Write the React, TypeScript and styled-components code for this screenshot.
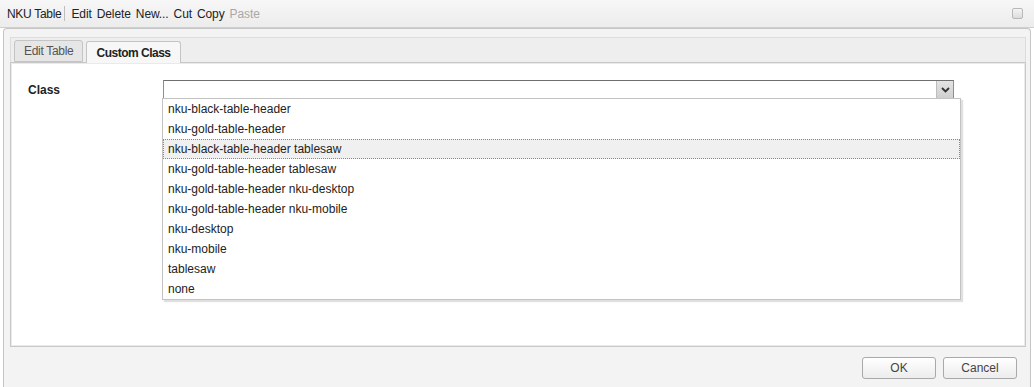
import styled, { createGlobalStyle } from 'styled-components';

const GlobalStyle = createGlobalStyle`
  html, body {
    margin: 0;
    padding: 0;
    background: #ffffff;
  }
  body {
    font-family: 'Liberation Sans', Arial, sans-serif;
    font-size: 12px;
    color: #222;
  }
`;

const Page = styled.div`
  width: 1034px;
  height: 387px;
  display: flex;
  flex-direction: column;
  background: #fff;
  overflow: hidden;
`;

const Toolbar = styled.div`
  height: 27px;
  flex: none;
  display: flex;
  align-items: center;
  padding: 0 11px 0 7px;
  background: linear-gradient(#f7f7f7, #ececec);
  border-bottom: 1px solid #cfcfcf;
`;

const ToolItem = styled.span<{ $disabled?: boolean }>`
  margin-right: 5px;
  letter-spacing: -0.1px;
  color: ${(p) => (p.$disabled ? '#a8a8a8' : '#222')};
  white-space: nowrap;
`;

const Title = styled.span`
  margin-right: 3px;
  letter-spacing: -0.3px;
  color: #222;
  white-space: nowrap;
`;

const Separator = styled.span`
  width: 1px;
  height: 15px;
  background: #bdbdbd;
  margin: 0 6px 0 0;
`;

const CloseBox = styled.span`
  margin-left: auto;
  width: 9px;
  height: 9px;
  border: 1px solid #b8b8b8;
  border-radius: 2px;
  background: linear-gradient(#f4f4f4, #dcdcdc);
`;

const Dialog = styled.div`
  flex: 1;
  margin: 0 3px 0 3px;
  border: 1px solid #c6c6c6;
  border-bottom: none;
  border-radius: 4px 4px 0 0;
  background: #f3f3f3;
  display: flex;
  flex-direction: column;
  padding: 8px 4px 0 6px;
`;

const TabStrip = styled.div`
  height: 24px;
  display: flex;
  align-items: flex-end;
  gap: 3px;
  padding-left: 3px;
  border: 1px solid #dcdcdc;
  border-bottom: none;
  background: #eeeeee;
`;

const Tab = styled.div<{ $active?: boolean }>`
  height: ${(p) => (p.$active ? '21px' : '20px')};
  margin-bottom: ${(p) => (p.$active ? '-1px' : '0')};
  display: flex;
  align-items: center;
  padding: 0 9px;
  border: 1px solid #c4c4c4;
  border-bottom: ${(p) => (p.$active ? 'none' : '1px solid #c4c4c4')};
  border-radius: 3px 3px 0 0;
  background: ${(p) => (p.$active ? '#f7f7f7' : '#e6e6e6')};
  color: ${(p) => (p.$active ? '#222' : '#555')};
  font-weight: ${(p) => (p.$active ? 'bold' : 'normal')};
  letter-spacing: ${(p) => (p.$active ? '-0.5px' : '-0.3px')};
  position: relative;
  z-index: 1;
`;

const Panel = styled.div`
  height: 285px;
  position: relative;
  background: #fff;
  border: 1px solid #c8c8c8;
  box-shadow: inset 0 0 0 1px #eaeaea;
  padding: 17px 16px;
  box-sizing: border-box;
`;

const FieldRow = styled.div`
  display: flex;
  align-items: center;
`;

const Label = styled.label`
  width: 135px;
  flex: none;
  padding-left: 1px;
  font-weight: bold;
  color: #222;
`;

const SelectBox = styled.div`
  width: 789px;
  height: 17px;
  display: flex;
  border: 1px solid #8e8e8e;
  border-top-color: #6f6f6f;
  background: #fff;
`;

const SelectValue = styled.div`
  flex: 1;
`;

const ArrowButton = styled.div`
  width: 16px;
  display: flex;
  align-items: center;
  justify-content: center;
  background: linear-gradient(#e4e4e4, #cfcfcf);
  border-left: 1px solid #bdbdbd;
`;

const DropList = styled.ul`
  position: absolute;
  left: 151px;
  top: 35px;
  width: 797px;
  margin: 0;
  padding: 0;
  list-style: none;
  background: #fff;
  border: 1px solid #c3c3c3;
  box-shadow: 2px 2px 1px rgba(0, 0, 0, 0.12);
  z-index: 5;
`;

const DropItem = styled.li<{ $active?: boolean }>`
  height: 20px;
  line-height: 18px;
  box-sizing: border-box;
  padding: 0 4px;
  border: 1px ${(p) => (p.$active ? 'dotted #8a8a8a' : 'solid transparent')};
  background: ${(p) => (p.$active ? '#f0f0f0' : 'transparent')};
  color: #222;
  white-space: nowrap;
`;

const Footer = styled.div`
  flex: 1;
  display: flex;
  justify-content: flex-end;
  align-items: flex-start;
  gap: 7px;
  padding: 10px 9px 0 0;
`;

const Button = styled.button`
  width: 74px;
  height: 22px;
  border: 1px solid #a9a9a9;
  border-radius: 3px;
  background: linear-gradient(#ffffff, #ececec);
  font-family: 'Liberation Sans', Arial, sans-serif;
  font-size: 12px;
  color: #444;
  padding: 0;
`;

const classes = [
  'nku-black-table-header',
  'nku-gold-table-header',
  'nku-black-table-header tablesaw',
  'nku-gold-table-header tablesaw',
  'nku-gold-table-header nku-desktop',
  'nku-gold-table-header nku-mobile',
  'nku-desktop',
  'nku-mobile',
  'tablesaw',
  'none',
];

export default function App() {
  return (
    <Page>
      <GlobalStyle />
      <Toolbar>
        <Title>NKU Table</Title>
        <Separator />
        <ToolItem>Edit</ToolItem>
        <ToolItem>Delete</ToolItem>
        <ToolItem>New...</ToolItem>
        <ToolItem>Cut</ToolItem>
        <ToolItem>Copy</ToolItem>
        <ToolItem $disabled>Paste</ToolItem>
        <CloseBox />
      </Toolbar>
      <Dialog>
        <TabStrip>
          <Tab>Edit Table</Tab>
          <Tab $active>Custom Class</Tab>
        </TabStrip>
        <Panel>
          <FieldRow>
            <Label>Class</Label>
            <SelectBox>
              <SelectValue />
              <ArrowButton>
                <svg width="9" height="6" viewBox="0 0 9 6">
                  <path d="M1 1 L4.5 4.5 L8 1" stroke="#333" strokeWidth="1.8" fill="none" />
                </svg>
              </ArrowButton>
            </SelectBox>
          </FieldRow>
          <DropList>
            {classes.map((c, i) => (
              <DropItem key={c} $active={i === 2}>
                {c}
              </DropItem>
            ))}
          </DropList>
        </Panel>
        <Footer>
          <Button>OK</Button>
          <Button>Cancel</Button>
        </Footer>
      </Dialog>
    </Page>
  );
}
